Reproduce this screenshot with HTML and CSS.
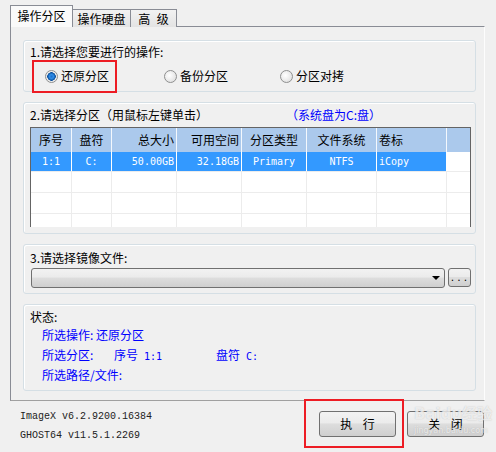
FILE: index.html
```html
<!DOCTYPE html>
<html lang="zh-CN">
<head>
    <meta charset="UTF-8">
    <title>分区工具</title>
    <link rel="stylesheet" href="styles.css">
</head>
<body>
    <div class="window">
        <!-- Tabs -->
        <div class="tabs">
            <div class="tab active">操作分区</div>
            <div class="tab">操作硬盘</div>
            <div class="tab wide">高 级</div>
        </div>

        <div class="panel">
            <!-- Step 1 -->
            <div class="group g1">
                <div class="label">1.请选择您要进行的操作:</div>
                <div class="radios">
                    <div class="radio checked"><span class="dot"></span>还原分区</div>
                    <div class="radio"><span class="dot"></span>备份分区</div>
                    <div class="radio"><span class="dot"></span>分区对拷</div>
                </div>
            </div>

            <!-- Step 2 -->
            <div class="group g2">
                <div class="label-row">
                    <span class="label-main">2.请选择分区（用鼠标左键单击）</span>
                    <span class="blue">（系统盘为C:盘）</span>
                </div>
                <div class="grid">
                    <div class="row head">
                        <div class="c">序号</div>
                        <div class="c">盘符</div>
                        <div class="r">总大小</div>
                        <div class="r">可用空间</div>
                        <div class="c">分区类型</div>
                        <div class="c">文件系统</div>
                        <div class="l">卷标</div>
                        <div></div>
                    </div>
                    <div class="row sel mono">
                        <div class="c">1:1</div>
                        <div class="c">C:</div>
                        <div class="r">50.00GB</div>
                        <div class="r">32.18GB</div>
                        <div class="c">Primary</div>
                        <div class="c">NTFS</div>
                        <div class="l">iCopy</div>
                        <div class="blank"></div>
                    </div>
                    <div class="row empty"><div></div><div></div><div></div><div></div><div></div><div></div><div></div><div></div></div>
                    <div class="row empty"><div></div><div></div><div></div><div></div><div></div><div></div><div></div><div></div></div>
                    <div class="row empty"><div></div><div></div><div></div><div></div><div></div><div></div><div></div><div></div></div>
                </div>
            </div>

            <!-- Step 3 -->
            <div class="group g3">
                <div class="label">3.请选择镜像文件:</div>
                <div class="file-row">
                    <div class="combo"><span class="arrow"></span></div>
                    <div class="browse">...</div>
                </div>
            </div>

            <!-- Status -->
            <div class="group g4">
                <div class="label">状态:</div>
                <div class="status">
                    <div class="line">所选操作: 还原分区</div>
                    <div class="line">
                        <span class="k1">所选分区:</span>
                        <span class="k2">序号</span>
                        <span class="v2 mono">1:1</span>
                        <span class="k2">盘符</span>
                        <span class="mono">C:</span>
                    </div>
                    <div class="line">所选路径/文件:</div>
                </div>
            </div>
        </div>

        <div class="footer">
            <div class="versions">
                <div>ImageX v6.2.9200.16384</div>
                <div>GHOST64 v11.5.1.2269</div>
            </div>
            <div class="buttons">
                <div class="btn">执 行</div>
                <div class="btn">关 闭</div>
            </div>
        </div>
    </div>

    <!-- Annotation marks and watermark -->
    <div class="mark mark-radio"></div>
    <div class="mark mark-exec"></div>
    <div class="watermark">
        <div class="wm-big">Baidu经验</div>
        <div class="wm-small">jingyan.baidu.com</div>
    </div>
</body>
</html>
```

FILE: styles.css
```css
* {
    box-sizing: border-box;
}

body {
    margin: 0;
    width: 496px;
    height: 452px;
    background: #f0f0f0;
    font-family: "Noto Sans CJK SC", "DejaVu Sans", sans-serif;
    font-size: 12px;
    color: #000;
    position: relative;
    overflow: hidden;
}

.mono {
    font-family: "DejaVu Sans Mono", "Liberation Mono", monospace;
    font-size: 10px;
}

.window {
    padding-top: 5px;
}

/* Tabs */
.tabs {
    display: flex;
    align-items: flex-end;
    margin-left: 10px;
    height: 22px;
    position: relative;
    z-index: 1;
}

.tab {
    width: 58px;
    height: 18px;
    line-height: 17px;
    text-align: center;
    border: 1px solid #898c95;
    border-bottom: none;
    border-left: none;
    background: linear-gradient(#f2f2f2, #e3e3e3);
}

.tab.wide {
    width: 46px;
    word-spacing: 4px;
}

.tab.active {
    width: 63px;
    height: 22px;
    line-height: 20px;
    border-left: 1px solid #898c95;
    background: #fafafa;
}

/* Panel */
.panel {
    margin-left: 10px;
    margin-top: -1px;
    width: 475px;
    height: 375px;
    border: 1px solid #898c95;
    border-right-color: #fdfdfd;
    border-bottom-color: #a0a0a0;
    padding: 13px 0 0 12px;
    display: flex;
    flex-direction: column;
    gap: 10px;
}

.group {
    width: 453px;
    border: 1px solid #d5dfe5;
    border-radius: 3px;
    box-shadow: inset 1px 1px 0 #fff;
    padding-left: 6px;
}

.g1 { height: 52px; padding-top: 4px; }
.g2 { height: 132px; padding-top: 5px; }
.g3 { height: 50px; padding-top: 6px; }
.g4 { height: 87px; padding-top: 5px; }

.label {
    line-height: 14px;
}

/* Radios */
.radios {
    display: flex;
    margin-top: 9px;
    padding-left: 15px;
    line-height: 16px;
}

.radio {
    display: flex;
    align-items: center;
    gap: 3px;
    width: 119px;
}

.radio + .radio {
    width: 116px;
}

.dot {
    width: 13px;
    height: 13px;
    border-radius: 50%;
    border: 1px solid #8e8f8f;
    background: radial-gradient(circle at 40% 40%, #fff, #d9d9d9);
}

.radio.checked .dot {
    background: radial-gradient(circle, #1a6fd0 0, #2f8ce6 2px, #0b4f9c 4px, #e9e9e9 4.5px, #fff 100%);
}

/* Partition list */
.label-row {
    display: flex;
    line-height: 14px;
}

.label-main {
    width: 256px;
}

.blue {
    color: #0000ff;
}

.grid {
    margin-top: 5px;
    width: 441px;
    height: 100px;
    border: 1px solid #646464;
    border-bottom: none;
    background: #fff;
    overflow: hidden;
}

.row {
    display: grid;
    grid-template-columns: 41px 40px 65px 65px 65px 70px 70px 1fr;
}

.row > div {
    border-right: 1px solid #fff;
    padding: 0 2px;
    white-space: nowrap;
}

.row > div:last-child {
    border-right: none;
}

.c { text-align: center; }
.r { text-align: right; }
.l { text-align: left; }

.head {
    height: 24px;
    line-height: 23px;
    background: #abc9ec;
}

.head > div {
    border-right-color: #f4f8fd;
}

.sel {
    height: 20px;
    line-height: 19px;
    background: #3399ff;
    color: #fff;
    border-bottom: 1px solid #ececec;
}

.sel .blank {
    background: #fff;
}

.empty {
    height: 21px;
    border-bottom: 1px solid #ececec;
}

.empty > div {
    border-right-color: #ececec;
}

/* File selection */
.file-row {
    display: flex;
    align-items: flex-start;
    gap: 3px;
    margin-top: 3px;
    margin-left: 1px;
}

.combo {
    width: 414px;
    height: 20px;
    border: 1px solid #707070;
    border-radius: 3px;
    background: linear-gradient(#f2f2f2 0, #ebebeb 45%, #dddddd 50%, #cfcfcf 100%);
    position: relative;
}

.arrow {
    position: absolute;
    right: 4px;
    top: 7px;
    border-left: 4px solid transparent;
    border-right: 4px solid transparent;
    border-top: 4px solid #000;
}

.browse {
    width: 23px;
    height: 19px;
    border: 1px solid #707070;
    border-radius: 3px;
    background: linear-gradient(#f2f2f2 0, #ebebeb 45%, #dddddd 50%, #cfcfcf 100%);
    font-family: "DejaVu Sans Mono", monospace;
    font-size: 9px;
    letter-spacing: 1px;
    text-align: center;
    line-height: 18px;
}

/* Status */
.status {
    padding-left: 12px;
    margin-top: 1px;
    color: #0000ff;
}

.line {
    display: flex;
    align-items: baseline;
    height: 20px;
    line-height: 20px;
}

.k1 { width: 72px; }
.k2 { width: 30px; }
.v2 { width: 72px; }

/* Footer */
.footer {
    display: flex;
    justify-content: space-between;
    padding: 6px 12px 0 20px;
}

.versions {
    font-family: "Liberation Mono", "DejaVu Sans Mono", monospace;
    font-size: 10px;
    line-height: 19px;
    color: #222;
}

.buttons {
    display: flex;
    gap: 11px;
    padding-top: 4px;
}

.btn {
    width: 77px;
    height: 26px;
    border: 1px solid #707070;
    border-radius: 3px;
    background: linear-gradient(#f2f2f2 0, #ebebeb 45%, #dddddd 50%, #cfcfcf 100%);
    text-align: center;
    line-height: 24px;
    word-spacing: 8px;
}

/* Red annotation boxes */
.mark {
    position: absolute;
    border: 2px solid #ed1c24;
}

.mark-radio {
    left: 32px;
    top: 60px;
    width: 85px;
    height: 33px;
}

.mark-exec {
    left: 304px;
    top: 399px;
    width: 100px;
    height: 49px;
}

/* Faint watermark over the close button */
.watermark {
    position: absolute;
    left: 414px;
    top: 402px;
    color: rgba(255, 255, 255, 0.7);
    text-shadow: 0 0 1px rgba(140, 140, 140, 0.5);
    font-family: "DejaVu Sans", sans-serif;
    pointer-events: none;
}

.wm-big {
    font-size: 15px;
    font-weight: bold;
    line-height: 24px;
}

.wm-small {
    font-size: 8px;
    line-height: 10px;
}
```
